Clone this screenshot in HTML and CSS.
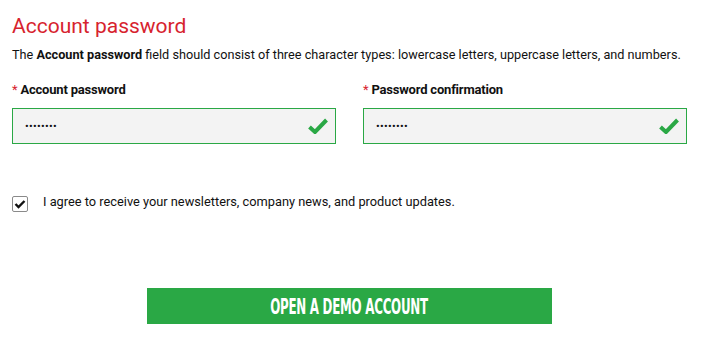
FILE: index.html
```html
<!DOCTYPE html>
<html>
<head>
<meta charset="utf-8">
<link rel="stylesheet" href="styles.css">
</head>
<body>
<div class="form">
  <h2 class="title">Account password</h2>
  <p class="desc">The <b>Account password</b> field should consist of three character types: lowercase letters, uppercase letters, and numbers.</p>
  <div class="fields">
    <div class="field">
      <label class="label"><span class="req">*</span> Account password</label>
      <div class="input">
        <span class="dots">••••••••</span>
        <svg class="ok" width="20" height="16" viewBox="0 0 20 16"><path d="M1.5 9 L7 14 L18.5 2" fill="none" stroke="#2aa845" stroke-width="4"/></svg>
      </div>
    </div>
    <div class="field">
      <label class="label"><span class="req">*</span> Password confirmation</label>
      <div class="input">
        <span class="dots">••••••••</span>
        <svg class="ok" width="20" height="16" viewBox="0 0 20 16"><path d="M1.5 9 L7 14 L18.5 2" fill="none" stroke="#2aa845" stroke-width="4"/></svg>
      </div>
    </div>
  </div>
  <div class="agree">
    <span class="box"><svg width="12" height="10" viewBox="0 0 12 10"><path d="M1.5 5 L4.5 8 L10.5 2" fill="none" stroke="#111" stroke-width="2.4"/></svg></span>
    <span class="agree-text">I agree to receive your newsletters, company news, and product updates.</span>
  </div>
  <div class="actions">
    <button class="btn"><span>OPEN A DEMO ACCOUNT</span></button>
  </div>
</div>
</body>
</html>
```
FILE: styles.css
```css
* { box-sizing: border-box; }
html, body { margin: 0; padding: 0; background: #fff; }
body { font-family: Roboto, "Liberation Sans", sans-serif; color: #111; }
.form { width: 687px; padding: 13px 0 0 12px; }
.title { margin: 0; font-size: 21px; font-weight: 400; color: #d7232e; line-height: 26px; }
.desc { margin: 8px 0 0; font-size: 12.7px; line-height: 16px; color: #111; white-space: nowrap; }
.desc b { font-weight: 700; }
.fields { display: flex; gap: 27px; margin-top: 19px; }
.field { flex: 1; }
.label { display: block; font-size: 13px; font-weight: 700; line-height: 16px; letter-spacing: -0.2px; }
.req { color: #d7232e; font-weight: 400; }
.input { margin-top: 10px; height: 36px; border: 1px solid #2aa845; background: #f3f3f3; display: flex; align-items: center; justify-content: space-between; padding: 0 7px 0 12px; }
.dots { font-size: 11px; letter-spacing: 0.3px; color: #111; }
.ok { display: block; }
.agree { display: flex; align-items: center; margin-top: 48px; gap: 15px; }
.box { width: 16px; height: 16px; border: 1px solid #8a8a8a; border-radius: 2px; display: flex; align-items: center; justify-content: center; margin-top: 4px; }
.box svg { display: block; }
.agree-text { font-size: 12.8px; line-height: 16px; }
.actions { display: flex; justify-content: center; margin-top: 76px; padding-right: 1px; }
.btn { width: 405px; height: 36px; background: #2aa845; border: none; color: #fff; font-family: "DejaVu Sans", Roboto, sans-serif; font-weight: 700; font-size: 22px; padding: 0; display: flex; align-items: center; justify-content: center; }
.btn span { display: inline-block; transform: scaleX(0.54); letter-spacing: -0.5px; white-space: nowrap; }
```
